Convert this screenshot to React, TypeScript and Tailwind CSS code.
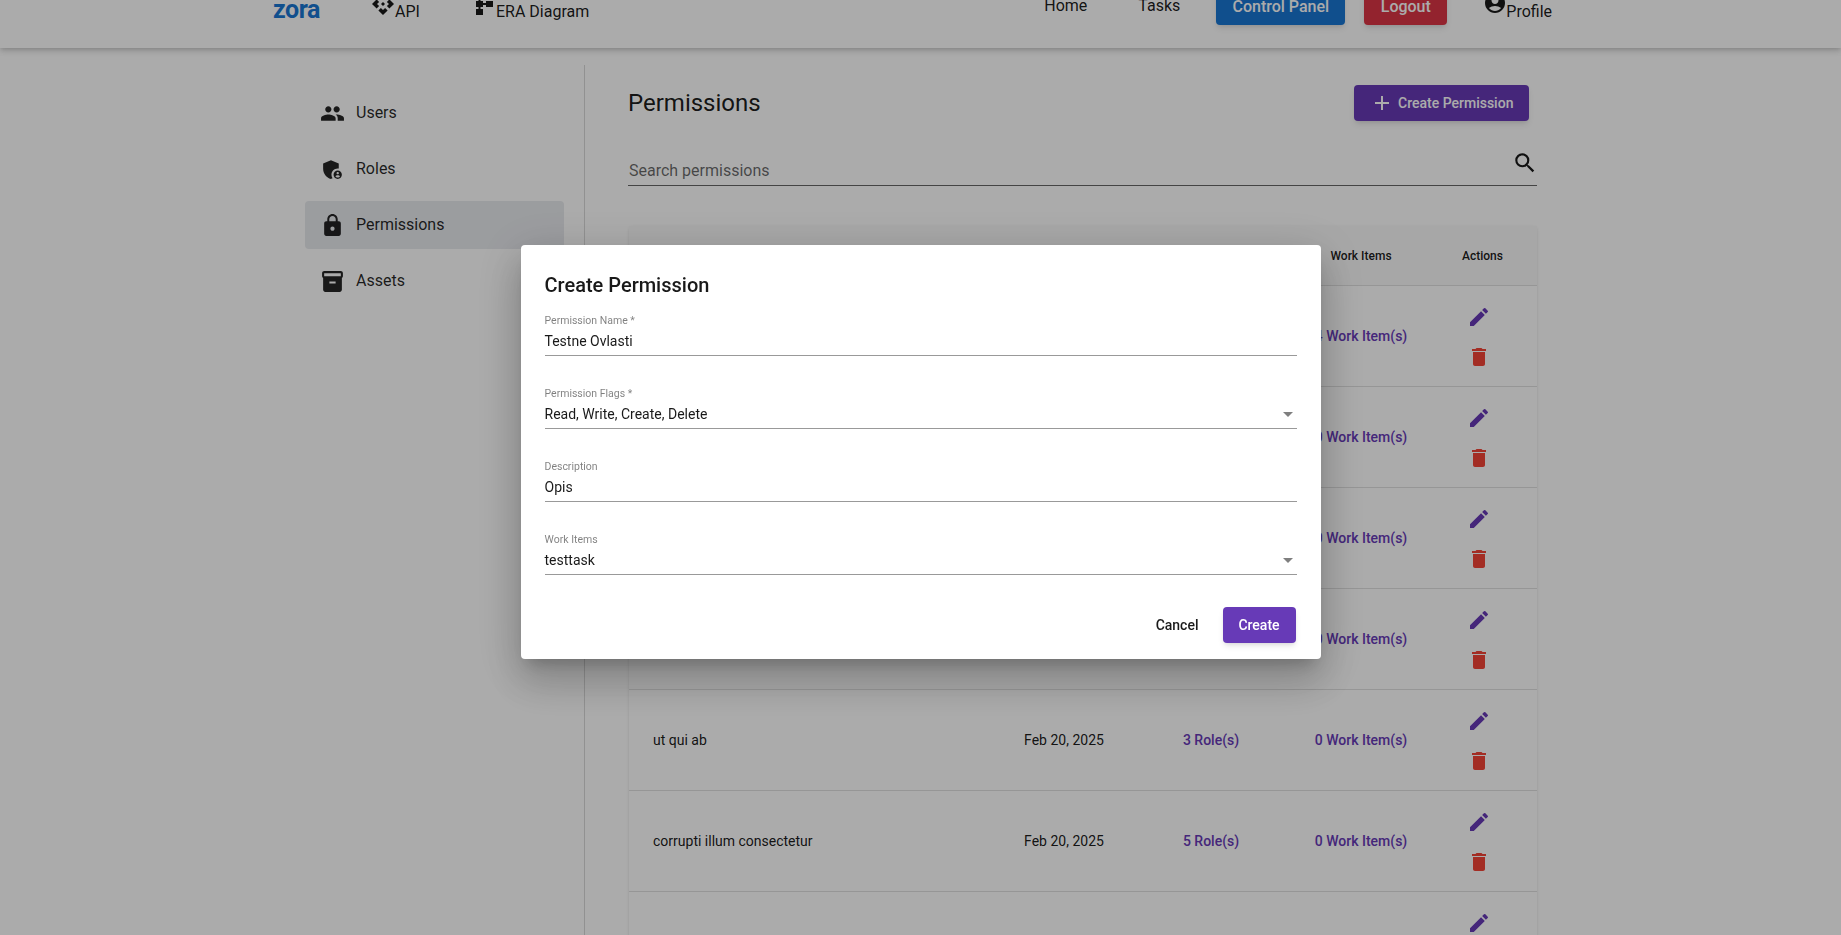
import React from 'react';
import {
  MdAccountCircle,
  MdAdd,
  MdAdminPanelSettings,
  MdApi,
  MdArrowDropDown,
  MdDelete,
  MdEdit,
  MdInventory2,
  MdLock,
  MdPeople,
  MdSchema,
  MdSearch,
} from 'react-icons/md';

const navItems = [
  { label: 'Users', icon: MdPeople },
  { label: 'Roles', icon: MdAdminPanelSettings },
  { label: 'Permissions', icon: MdLock, active: true },
  { label: 'Assets', icon: MdInventory2 },
];

const rows = [
  { name: 'quia voluptas', date: 'Feb 20, 2025', roles: 2, items: 4 },
  { name: 'dolorem sit', date: 'Feb 20, 2025', roles: 4, items: 0 },
  { name: 'aut rerum', date: 'Feb 20, 2025', roles: 1, items: 0 },
  { name: 'nihil tempore', date: 'Feb 20, 2025', roles: 3, items: 0 },
  { name: 'ut qui ab', date: 'Feb 20, 2025', roles: 3, items: 0 },
  { name: 'corrupti illum consectetur', date: 'Feb 20, 2025', roles: 5, items: 0 },
  { name: 'magnam eos', date: 'Feb 20, 2025', roles: 2, items: 0 },
];

const gridCols = 'grid grid-cols-[371px_128px_166px_134px_109px]';

function Field({ label, value, select }: { label: string; value: string; select?: boolean }) {
  return (
    <div className="relative border-b border-black/40 pt-px pb-1">
      <div className="h-[14px] text-[10.5px] leading-[14px] text-black/50">{label}</div>
      <div className="mt-[3px] h-5 text-sm leading-5 text-black/90">{value}</div>
      {select && <MdArrowDropDown className="absolute right-[-3px] bottom-[2px] text-black/50" size={24} />}
    </div>
  );
}

function Header() {
  return (
    <header className="flex h-16 items-start bg-white pl-[273px] shadow-[0_2px_4px_-1px_rgba(0,0,0,0.12),0_4px_5px_0_rgba(0,0,0,0.08),0_1px_10px_0_rgba(0,0,0,0.07)]">
      <span className="mt-[10px] w-[98px] text-[25px] leading-8 font-bold tracking-[-0.5px] text-[#1976d2]">zora</span>
      <div className="mt-[8px] flex w-[101px] items-start text-black/90">
        <MdApi size={24} />
        <span className="mt-[8px] leading-6">API</span>
      </div>
      <div className="mt-[8px] flex items-start text-black/90">
        <MdSchema size={24} />
        <span className="mt-[8px] leading-6">ERA Diagram</span>
      </div>
      <div className="ml-[455px] flex items-start">
        <span className="mt-[10px] w-[94px] leading-6 text-black/90">Home</span>
        <span className="mt-[10px] w-[78px] leading-6 text-black/90">Tasks</span>
        <button className="mt-[5px] h-9 w-[129px] rounded bg-[#1976d2] pb-px font-medium text-white shadow-md">Control Panel</button>
        <button className="mt-[5px] ml-[19px] h-9 w-[83px] rounded bg-[#dc3545] pb-px font-medium text-white shadow-md">Logout</button>
        <div className="mt-[7px] ml-[36px] flex items-start text-black/90">
          <MdAccountCircle size={24} />
          <span className="mt-[9px] -ml-[1px] leading-6">Profile</span>
        </div>
      </div>
    </header>
  );
}

function Sidebar() {
  return (
    <nav className="w-[259px] pt-6">
      {navItems.map(({ label, icon: Icon, active }) => (
        <div key={label} className={`mb-2 flex h-12 items-center rounded px-4 ${active ? 'bg-[#e8eaee]' : ''}`}>
          <Icon className="mr-[11px] -ml-px text-black/85" size={25} />
          <span className="text-black/85">{label}</span>
        </div>
      ))}
    </nav>
  );
}

function PermissionsTable() {
  return (
    <div className="mt-10 rounded bg-white shadow-[0_1px_3px_0_rgba(0,0,0,0.12)]">
      <div className={`${gridCols} h-[60px] items-center border-b border-[#e0e0e0] bg-[#fafafa] pt-px text-center text-xs font-medium text-black/90`}>
        <div className="pl-6 text-left">Name</div>
        <div>Created</div>
        <div>Roles</div>
        <div>Work Items</div>
        <div>Actions</div>
      </div>
      {rows.map((row) => (
        <div key={row.name} className={`${gridCols} h-[101px] items-center border-b border-[#e0e0e0] text-center text-sm text-black/90`}>
          <div className="pl-6 text-left">{row.name}</div>
          <div>{row.date}</div>
          <div className="font-medium text-[#673ab7]">{row.roles} Role(s)</div>
          <div className="font-medium text-[#673ab7]">{row.items} Work Item(s)</div>
          <div className="flex flex-col items-center pt-[2px] pr-2">
            <button className="p-2 text-[#673ab7]"><MdEdit size={24} /></button>
            <button className="p-2 text-[#f44336]"><MdDelete size={24} /></button>
          </div>
        </div>
      ))}
    </div>
  );
}

function CreateDialog() {
  return (
    <div className="fixed inset-0 flex items-center justify-center bg-black/[0.33] pb-[31px]">
      <div className="w-[800px] rounded bg-white px-6 pt-6 pb-4 shadow-[0_11px_15px_-7px_rgba(0,0,0,0.2),0_24px_38px_3px_rgba(0,0,0,0.14),0_9px_46px_8px_rgba(0,0,0,0.12)]">
        <h2 className="text-xl leading-8 font-medium text-black/90">Create Permission</h2>
        <div className="mt-3 flex flex-col gap-[30px]">
          <Field label="Permission Name *" value="Testne Ovlasti" />
          <Field label="Permission Flags *" value="Read, Write, Create, Delete" select />
          <Field label="Description" value="Opis" />
          <Field label="Work Items" value="testtask" select />
        </div>
        <div className="mt-[32px] flex items-center justify-end pr-px">
          <button className="mr-[24px] -mt-px text-sm font-medium text-black/90">Cancel</button>
          <button className="h-9 w-[73px] rounded bg-[#673ab7] text-sm font-medium text-white shadow-md">Create</button>
        </div>
      </div>
    </div>
  );
}

export default function App() {
  return (
    <div className="h-screen overflow-hidden bg-white font-['Roboto',sans-serif]">
      <div className="-mt-4">
        <Header />
        <div className="flex pt-[17px] pl-[305px]">
          <Sidebar />
          <div className="ml-5 border-l border-black/15 pl-[43px]">
            <main className="w-[909px] pt-5">
              <div className="flex h-9 items-center justify-between pr-2">
                <h1 className="text-2xl text-black/90">Permissions</h1>
                <button className="flex h-9 w-[175px] items-center rounded bg-[#673ab7] pl-4 text-sm font-medium text-white shadow-md">
                  <MdAdd className="mr-1" size={24} />
                  Create Permission
                </button>
              </div>
              <div className="relative mt-[28px] border-b border-black/60 pb-[2px]">
                <div className="h-[34px] pt-[10px] pl-px leading-6 text-black/60">Search permissions</div>
                <MdSearch className="absolute top-[1px] -right-px text-black/90" size={26} />
              </div>
              <div className="pl-px">
                <PermissionsTable />
              </div>
            </main>
          </div>
        </div>
      </div>
      <CreateDialog />
    </div>
  );
}
